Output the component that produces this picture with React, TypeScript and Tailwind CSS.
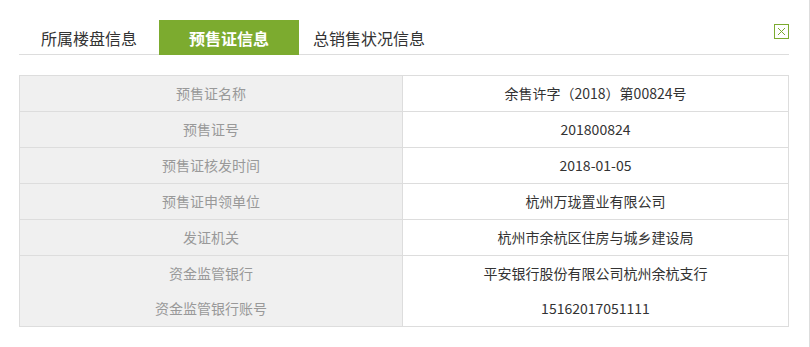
const tabs = ["所属楼盘信息", "预售证信息", "总销售状况信息"];

const rows: [string, string][] = [
  ["预售证名称", "余售许字（2018）第00824号"],
  ["预售证号", "201800824"],
  ["预售证核发时间", "2018-01-05"],
  ["预售证申领单位", "杭州万珑置业有限公司"],
  ["发证机关", "杭州市余杭区住房与城乡建设局"],
  ["资金监管银行", "平安银行股份有限公司杭州余杭支行"],
  ["资金监管银行账号", "15162017051111"],
];

function CloseIcon() {
  return (
    <button
      type="button"
      className="flex h-[15px] w-[15px] items-center justify-center border border-[#7cab2f] bg-white"
    >
      <svg width="9" height="9" viewBox="0 0 9 9">
        <path d="M1 1L8 8M8 1L1 8" stroke="#7cab2f" strokeWidth="1" />
      </svg>
    </button>
  );
}

export default function App() {
  return (
    <div
      className="h-[347px] w-[810px] border-r border-[#dddddd] bg-white pl-[19px] pr-[20px] pt-[20px]"
      style={{ fontFamily: '"Microsoft YaHei", "Noto Sans CJK SC", sans-serif' }}
    >
      <div className="relative flex h-[35px] border-b border-[#dddddd]">
        {tabs.map((tab, i) => (
          <div
            key={tab}
            className={[
              "flex h-[35px] w-[140px] items-center justify-center text-[16px]",
              i === 1
                ? "bg-[#7cab2f] font-bold text-white"
                : "text-[#333333]",
            ].join(" ")}
          >
            {tab}
          </div>
        ))}
        <div className="absolute right-0 top-[4px]">
          <CloseIcon />
        </div>
      </div>

      <div className="mt-[20px] border border-[#dddddd]">
        {rows.map(([label, value], i) => {
          const divided = i > 0 && i < rows.length - 1;
          return (
            <div
              key={label}
              className={[
                "grid grid-cols-[383px_1fr] text-[14px]",
                divided ? "h-[36px] border-t border-[#dddddd]" : "h-[35px]",
              ].join(" ")}
            >
              <div className="flex items-center justify-center border-r border-[#dddddd] bg-[#f0f0f0] text-[#999999]">
                {label}
              </div>
              <div className="flex items-center justify-center text-[#333333]">
                {value}
              </div>
            </div>
          );
        })}
      </div>
    </div>
  );
}
